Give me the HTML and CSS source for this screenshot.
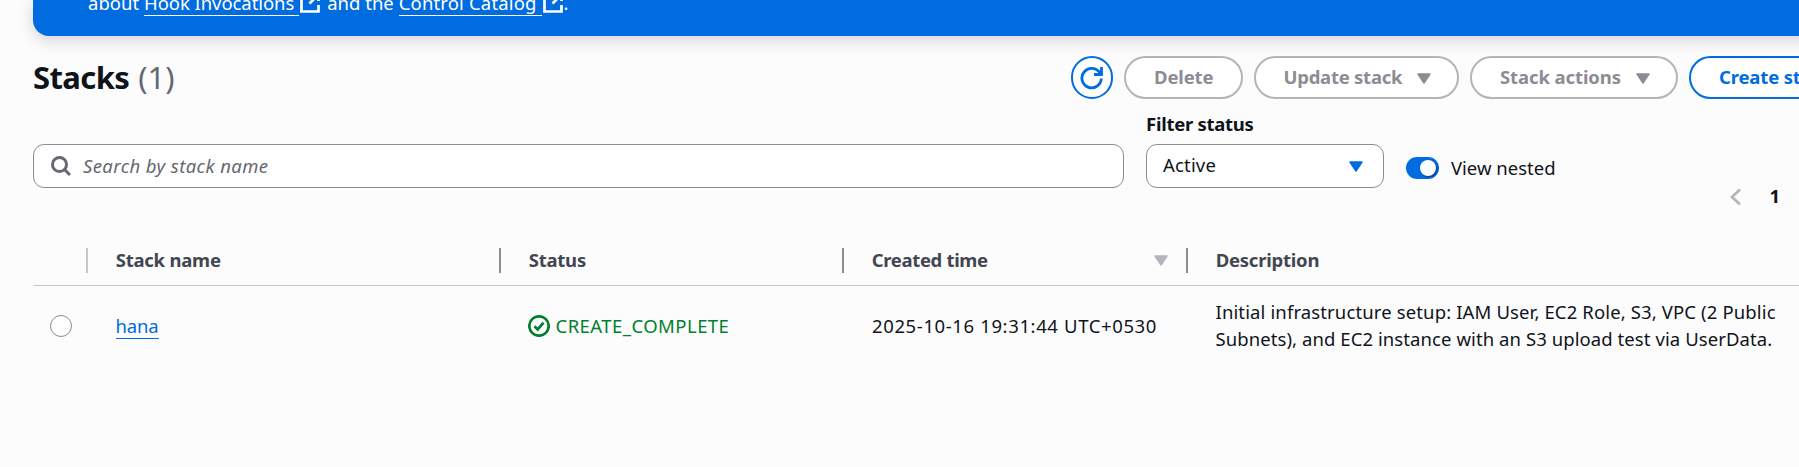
FILE: index.html
```html
<!DOCTYPE html>
<html lang="en">
<head>
<meta charset="utf-8">
<title>Stacks</title>
<link rel="stylesheet" href="styles.css">
</head>
<body>
<main class="page">
  <section class="banner">
    <p class="banner-text"><span class="t-about">about</span><a class="link-light t-hook">Hook Invocations</a><svg class="external" viewBox="0 0 20 20"><path d="M12 1.500h6.500V8M18 2 9.500 10.500M8 1.500H1.500v17h17V12"/></svg><span class="t-and">and the</span><a class="link-light t-control">Control Catalog</a><svg class="external last" viewBox="0 0 20 20"><path d="M12 1.500h6.500V8M18 2 9.500 10.500M8 1.500H1.500v17h17V12"/></svg><span>.</span></p>
  </section>
  <header class="heading">
    <h1 class="title"><span class="t-stacks">Stacks</span><span class="count">(1)</span></h1>
    <div class="actions">
      <button class="btn btn-icon"><svg class="refresh" viewBox="0 0 24 24"><path d="M21.500 1v7.500H14M21.300 12.500a9.700 9.700 0 1 1-1.300-5.300l1.300 1.300"/></svg></button>
      <button class="btn disabled delete"><span>Delete</span></button>
      <button class="btn disabled update"><span>Update stack</span><svg class="caret" viewBox="0 0 14 11"><path d="M1 1h12L7 10z"/></svg></button>
      <button class="btn disabled stack-actions"><span>Stack actions</span><svg class="caret" viewBox="0 0 14 11"><path d="M1 1h12L7 10z"/></svg></button>
      <button class="btn create"><span>Create stack</span></button>
    </div>
  </header>
  <section class="filters">
    <div class="search"><svg class="magnifier" viewBox="0 0 20 20"><circle cx="8.500" cy="8.500" r="7"/><path d="m13.500 13.500 5.500 5.500"/></svg><span class="placeholder">Search by stack name</span></div>
    <div class="field">
      <label class="label"><span>Filter status</span></label>
      <div class="select"><span class="value">Active</span><svg class="caret" viewBox="0 0 14 11"><path d="M1 1h12L7 10z"/></svg></div>
    </div>
    <div class="nested"><span class="toggle"><span class="knob"></span></span><span>View nested</span></div>
    <nav class="pager"><svg class="prev" viewBox="0 0 12 18"><path d="M10 1.500 2 9l8 7.500"/></svg><span class="current">1</span></nav>
  </section>
  <section class="table">
    <div class="row head">
      <div class="cell pick"></div>
      <div class="cell light"><span class="h-name">Stack name</span></div>
      <div class="cell"><span class="h-status">Status</span></div>
      <div class="cell"><span class="h-time">Created time</span><svg class="caret sort" viewBox="0 0 14 11"><path d="M1 1h12L7 10z"/></svg></div>
      <div class="cell"><span class="h-desc">Description</span></div>
    </div>
    <div class="row body">
      <div class="cell pick"><span class="radio"></span></div>
      <div class="cell"><a class="link">hana</a></div>
      <div class="cell status"><svg class="check" viewBox="0 0 22 22"><circle cx="11" cy="11" r="9.700"/><path d="m6.500 11.200 3.200 3.200 5.800-6.700"/></svg><span class="status-text">CREATE_COMPLETE</span></div>
      <div class="cell"><span class="time">2025-10-16 19:31:44 UTC+0530</span></div>
      <div class="cell desc"><span class="d1">Initial infrastructure setup: IAM User, EC2 Role, S3, VPC (2 Public</span><br><span class="d2">Subnets), and EC2 instance with an S3 upload test via UserData.</span></div>
    </div>
  </section>
</main>
</body>
</html>
```
FILE: styles.css
```css
* { box-sizing: border-box; }
body { margin: 0; background: #fcfcfd; color: #0f141a; font: 18.5px/27px "Noto Sans", "Open Sans", sans-serif; overflow: hidden; }
.page { width: 1799px; height: 467px; overflow: hidden; padding-left: 33px; }
svg { flex: none; fill: none; stroke: currentColor; }
span, a { white-space: nowrap; }
.banner { height: 36px; width: 1800px; background: #006ce0; border-radius: 0 0 0 16px; box-shadow: 0 4px 16px rgba(0, 7, 22, .17); color: #fff; padding-left: 55px; }
.banner-text { margin: 0; display: flex; height: 27px; align-items: flex-start; }
.banner-text > * { margin-top: -11px; }
.link-light { border-bottom: 1px solid #fff; height: 27px; padding-right: 5px; }
.t-hook { letter-spacing: -.07px; }
.t-control { letter-spacing: .15px; }
.banner-text .external { width: 20px; height: 20px; stroke-width: 2.700; margin: -7px 7px 0 1px; }
.banner-text .last { margin-right: 1px; }
.t-about, .t-and { margin-right: 5px; }
.heading { display: flex; height: 63px; padding-top: 20px; }
.title { margin: 0; display: flex; flex: none; gap: 9px; width: 1038px; font-size: 31px; line-height: 42px; }
.t-stacks { letter-spacing: -.6px; }
.count { font-weight: 400; color: #656871; }
.actions { display: flex; gap: 11px; }
.btn { font: 700 18.5px/27px "Noto Sans", sans-serif; letter-spacing: -.15px; display: flex; align-items: center; flex: none; height: 43px; border: 2px solid #006ce0; border-radius: 22px; background: #fff; color: #006ce0; padding: 0 0 2px 28px; }
.btn-icon { width: 42px; padding: 0; justify-content: center; }
.refresh { width: 24px; height: 24px; stroke-width: 2.800; }
.disabled { border-color: #b4b4bb; color: #8c8c94; }
.caret { width: 14px; height: 11px; fill: currentColor; stroke-width: 1.500; stroke-linejoin: round; }
.btn .caret { margin-top: 3px; }
.delete { width: 119px; }
.update { width: 205px; gap: 15px; padding-left: 27.500px; letter-spacing: -.25px; }
.stack-actions { width: 208px; gap: 15px; letter-spacing: -.1px; }
.create { width: 170px; }
.filters { display: flex; height: 130px; align-items: flex-start; }
.search, .select { height: 44px; border: 1px solid #8c8c94; border-radius: 11px; background: #fff; display: flex; align-items: center; }
.search { margin-top: 45px; width: 1091px; padding-left: 17px; gap: 12px; color: #656871; }
.magnifier { width: 20px; height: 20px; stroke-width: 3; }
.placeholder { font-style: italic; letter-spacing: .4px; padding-bottom: 2px; }
.field { margin: 11px 0 0 22px; width: 238px; }
.label { display: block; height: 34px; font-weight: 700; letter-spacing: -.27px; }
.select { justify-content: space-between; padding: 0 20px 0 16px; }
.value { letter-spacing: .17px; padding-bottom: 3px; }
.select .caret { color: #006ce0; }
.nested { display: flex; align-items: center; margin: 55px 0 0 22px; gap: 12px; }
.toggle { width: 33px; height: 22px; border-radius: 11px; background: #006ce0; display: flex; justify-content: flex-end; padding: 3px; }
.knob { width: 16px; height: 16px; border-radius: 50%; background: #fff; box-shadow: 1px 1px 2px rgba(0, 7, 22, .5); }
.pager { margin: 83px 19px 0 auto; display: flex; align-items: center; gap: 27px; font-weight: 700; }
.prev { width: 12px; height: 18px; color: #b4b4bb; stroke-width: 2.700; margin-top: 2px; }
.row { display: grid; grid-template-columns: 52px 413px 343px 344px 1fr; margin-left: 1px; }
.cell { display: flex; align-items: center; padding: 0 0 2px 29.500px; }
.head { height: 57px; border-bottom: 1px solid #c6c6cd; color: #424650; font-weight: 700; padding: 19px 0 13px; letter-spacing: -.23px; }
.head .cell { border-left: 2px solid #8c8c94; padding: 0 0 0 27.700px; }
.head .cell span { margin-top: -2px; }
.head .cell.light { border-color: #c6c6cd; }
.head .cell.pick { border: 0; }
.h-time { letter-spacing: -.34px; }
.sort { color: #b4b4bb; margin: 0 18px 0 auto; }
.body { height: 81px; }
.body .pick { padding: 0 0 1px 16px; }
.radio { width: 22px; height: 22px; border: 1.500px solid #8c8c94; border-radius: 50%; background: #fff; }
.link { color: #006ce0; border-bottom: 1px solid; letter-spacing: -.15px; height: 26px; line-height: 26px; }
.body .status { color: #00802f; gap: 6px; padding-left: 28.500px; }
.status-text { letter-spacing: .45px; }
.check { width: 22px; height: 22px; stroke-width: 2.700; margin-top: 1px; }
.time { letter-spacing: .62px; padding-left: .5px; }
.desc { display: block; padding-top: 12px; line-height: 27px; }
.d1 { letter-spacing: .13px; }
.d2 { letter-spacing: .08px; }
```
